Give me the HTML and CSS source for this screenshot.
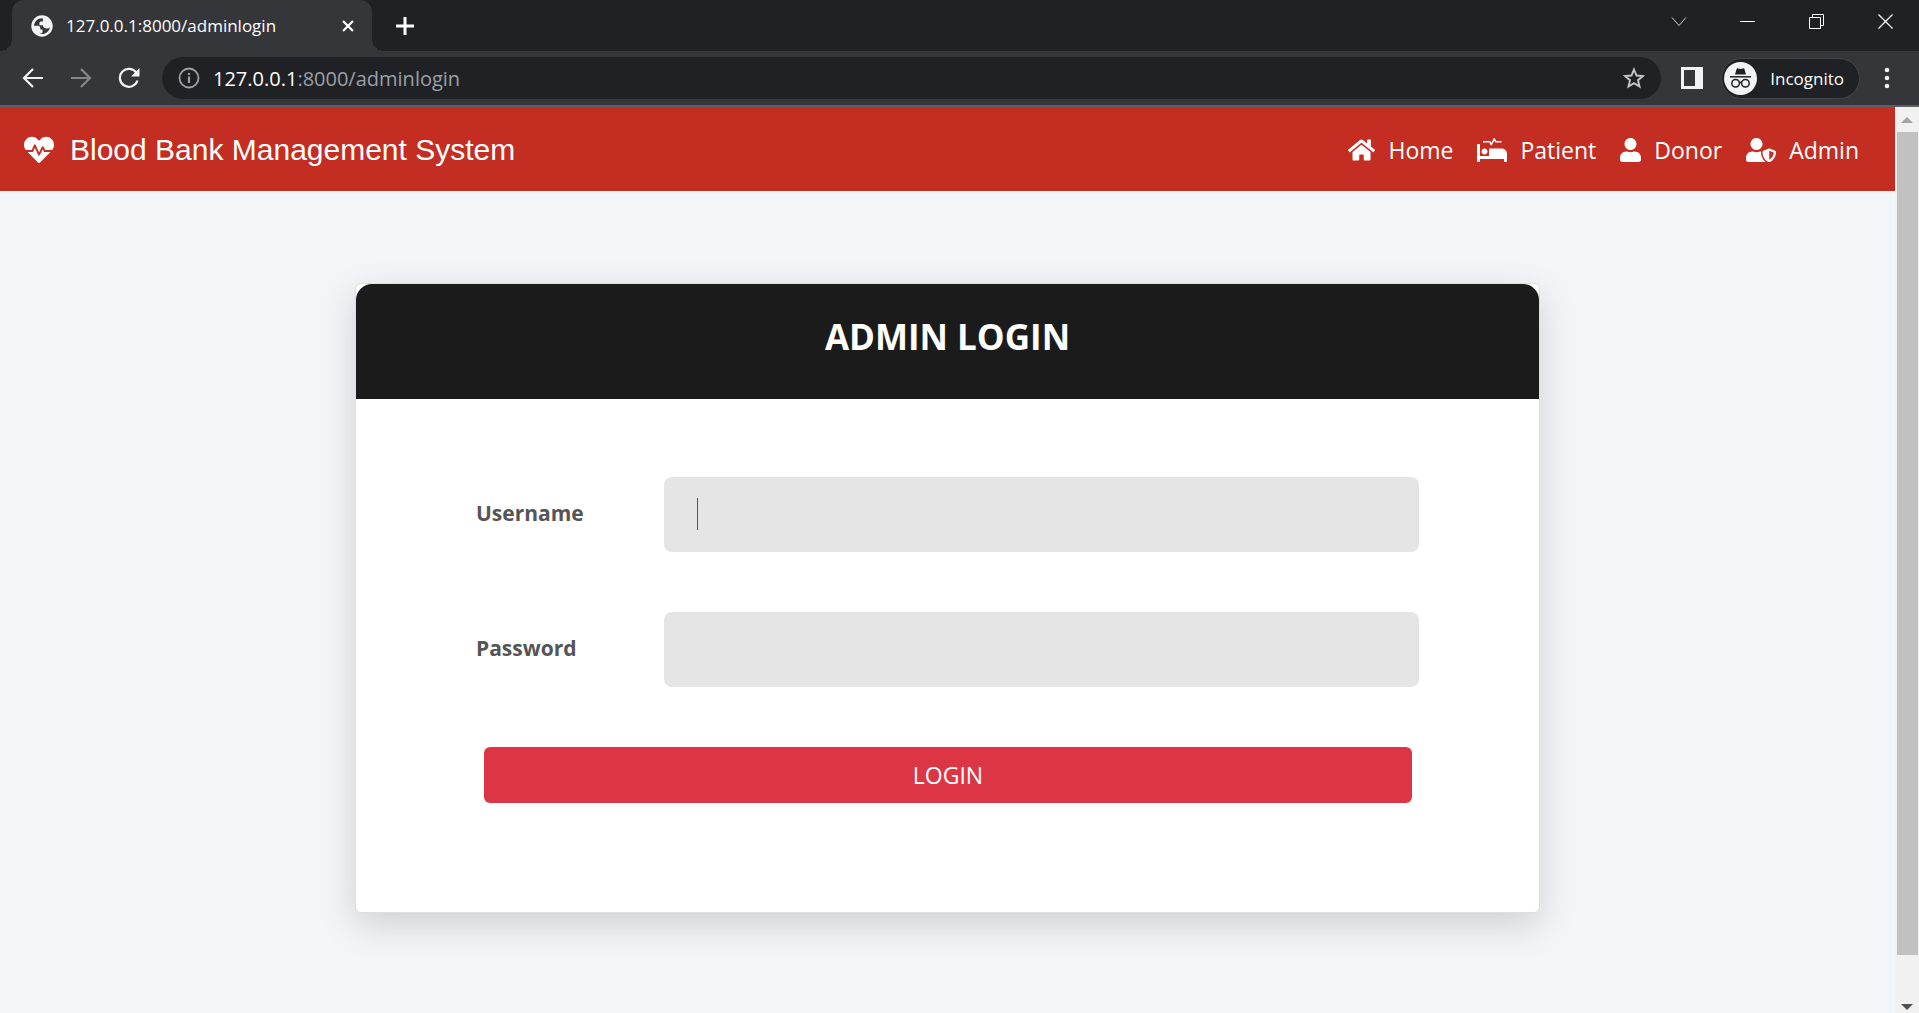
FILE: index.html
```html
<!DOCTYPE html>
<html lang="en">
<head>
<meta charset="utf-8">
<meta name="viewport" content="width=device-width, initial-scale=1">
<title>127.0.0.1:8000/adminlogin</title>
<link rel="stylesheet" href="styles.css">
</head>
<body>
<div class="browser">
  <div class="tabstrip">
    <div class="tab">
      <svg class="globe" viewBox="0 0 22 22" width="22" height="22"><circle cx="11" cy="11" r="10.7" fill="#f1f3f4"/><path d="M11.5 3.2C6.8 3 3.4 6.500 3 10.800h3.600c1.900 0 2.700.9 2.700 2.400v1.300h2.200v3.300c-1 .5-2.400.6-3.300.3 1.600.9 3.300 1.100 5 .7 3.200-.9 5.300-3.400 5.700-6.500-1 1-2.200 1.300-3.600 1.100-2.200-.2-3.300-1.400-3.500-3.200H8.400V8.100c0-1.100.7-1.700 1.800-1.700h1.700V4.800c0-.6-.1-1.100-.4-1.600z" fill="#35363a"/></svg>
      <span class="tab-title">127.0.0.1:8000/adminlogin</span>
      <button class="plain" type="button" aria-label="Close tab"><svg viewBox="0 0 14 14" width="14" height="14"><path d="M2 2l10 10M12 2L2 12" stroke="#fff" stroke-width="2.200" fill="none"/></svg></button>
    </div>
    <button class="plain new-tab" type="button" aria-label="New tab"><svg viewBox="0 0 18 18" width="18" height="18"><path d="M9 0v18M0 9h18" stroke="#fff" stroke-width="3" fill="none"/></svg></button>
    <div class="window-controls">
      <button class="plain" type="button" aria-label="Search tabs"><svg viewBox="0 0 16 16" width="16" height="16"><path d="M1 3.500l7 8 7-8" stroke="#ccc" fill="none"/></svg></button>
      <button class="plain" type="button" aria-label="Minimize"><svg viewBox="0 0 16 16" width="16" height="16"><path d="M0 7.500h15" stroke="#fff" fill="none"/></svg></button>
      <button class="plain" type="button" aria-label="Restore"><svg viewBox="0 0 16 16" width="16" height="16"><path d="M.5 3.500h11v11H.5zM3.500 3V.5h11v11H12" stroke="#fff" fill="none"/></svg></button>
      <button class="plain" type="button" aria-label="Close"><svg viewBox="0 0 16 16" width="16" height="16"><path d="M.5.5l14 14M14.500.5l-14 14" stroke="#fff" stroke-width="1.200" fill="none"/></svg></button>
    </div>
  </div>
  <div class="toolbar">
    <button class="plain" type="button" aria-label="Back"><svg viewBox="0 0 22 22" width="22" height="22"><path d="M21 11H3M11 2l-9 9 9 9" stroke="#f1f3f4" stroke-width="2.200" fill="none"/></svg></button>
    <button class="plain" type="button" aria-label="Forward"><svg viewBox="0 0 22 22" width="22" height="22"><path d="M1 11h18M11 2l9 9-9 9" stroke="#85868a" stroke-width="2.200" fill="none"/></svg></button>
    <button class="plain" type="button" aria-label="Reload"><svg viewBox="0 0 22 22" width="22" height="22"><path d="M18.500 6A9 9 0 1 0 19.500 13.500" stroke="#f1f3f4" stroke-width="2.200" fill="none"/><path d="M21.500 1v8.500H13z" fill="#f1f3f4"/></svg></button>
    <div class="omnibox">
      <svg viewBox="0 0 22 22" width="22" height="22"><circle cx="11" cy="11" r="9.500" stroke="#9aa0a6" stroke-width="1.800" fill="none"/><path d="M11 9.500v6.500M11 6v2" stroke="#9aa0a6" stroke-width="2.200"/></svg>
      <div class="url"><span class="host">127.0.0.1</span>:8000/adminlogin</div>
      <button class="plain" type="button" aria-label="Bookmark"><svg viewBox="0 0 22 22" width="22" height="22"><path d="M11 2.500l2.500 6 6.400.5-4.900 4.200 1.500 6.300-5.500-3.400-5.500 3.400L7 13.200 2.100 9l6.400-.5z" stroke="#c4c7c9" stroke-width="1.900" fill="none"/></svg></button>
    </div>
    <button class="plain" type="button" aria-label="Side panel"><svg viewBox="0 0 22 22" width="22" height="22"><path fill-rule="evenodd" d="M0 0h22v22H0zM3 3v16h11V3z" fill="#f1f3f4"/></svg></button>
    <div class="profile">
      <svg viewBox="0 0 33 33" width="33" height="33"><circle cx="16.500" cy="16.500" r="16.500" fill="#f1f3f4"/><path d="M11 12.500l1.600-5.400c.2-.7.7-.9 1.300-.7l2.600.6 2.600-.6c.6-.2 1.100 0 1.300.7l1.600 5.400z" fill="#202124"/><path d="M6 14.800h21" stroke="#202124" stroke-width="1.500"/><g stroke="#202124" stroke-width="1.500" fill="none"><circle cx="11.600" cy="21.300" r="3.800"/><circle cx="21.400" cy="21.300" r="3.800"/><path d="M15.300 20.800q1.200-.9 2.400 0"/></g></svg>
      <span>Incognito</span>
    </div>
    <button class="plain" type="button" aria-label="Menu"><svg viewBox="0 0 22 22" width="22" height="22"><g fill="#f1f3f4"><circle cx="11" cy="3" r="2.300"/><circle cx="11" cy="11" r="2.300"/><circle cx="11" cy="19" r="2.300"/></g></svg></button>
  </div>
</div>
<div class="viewport">
  <div class="page">
    <header class="site-header">
      <a class="brand" href="#"><svg viewBox="0 0 512 512" width="30" height="30"><path d="M320.200 243.800l-49.700 99.400c-6 12.100-23.400 11.700-28.900-.6l-56.900-126.300-30 71.700H60.600l182.500 186.500c7.100 7.300 18.600 7.300 25.700 0L451.400 288H342.300l-22.100-44.200zM473.700 73.900l-2.400-2.500c-51.500-52.600-135.800-52.600-187.400 0L256 100l-27.900-28.500c-51.500-52.700-135.900-52.700-187.400 0l-2.400 2.400C-10.400 123.700-12.500 203 31 256h102.400l35.900-86.200c5.400-12.900 23.600-13.200 29.400-.4l58.200 129.300 49-97.900c5.900-11.800 22.700-11.800 28.600 0l27.600 55.200H481c43.500-53 41.400-132.300-7.300-182.100z"/></svg><span>Blood Bank Management System</span></a>
      <nav class="nav">
        <a href="#"><svg viewBox="0 0 576 512" width="27" height="24"><path d="M280.370 148.260L96 300.110V464a16 16 0 0 0 16 16l112.060-.29a16 16 0 0 0 15.920-16V368a16 16 0 0 1 16-16h64a16 16 0 0 1 16 16v95.640a16 16 0 0 0 16 16.050L464 480a16 16 0 0 0 16-16V300L295.670 148.260a12.190 12.190 0 0 0-15.300 0zM571.600 251.470L488 182.560V44.050a12 12 0 0 0-12-12h-56a12 12 0 0 0-12 12v72.610L318.470 43a48 48 0 0 0-61 0L4.340 251.470a12 12 0 0 0-1.600 16.900l25.500 31A12 12 0 0 0 45.150 301l235.220-193.740a12.190 12.190 0 0 1 15.300 0L530.900 301a12 12 0 0 0 16.900-1.600l25.500-31a12 12 0 0 0-1.700-16.930z"/></svg>Home</a>
        <a href="#"><svg viewBox="0 0 640 512" width="30" height="24"><path d="M528 224H272c-8.800 0-16 7.200-16 16v144H64V144c0-8.800-7.200-16-16-16H16c-8.800 0-16 7.200-16 16v352c0 8.800 7.200 16 16 16h32c8.800 0 16-7.200 16-16v-48h512v48c0 8.800 7.200 16 16 16h32c8.800 0 16-7.200 16-16V336c0-61.900-50.100-112-112-112zM136 96h126.100l27.600 55.200c5.900 11.800 22.700 11.800 28.600 0L368 51.800 390.100 96H512c8.800 0 16-7.200 16-16s-7.200-16-16-16H409.900L382.300 8.800C376.400-3 359.600-3 353.700 8.800L304 108.200l-19.900-39.800c-1.400-2.700-4.100-4.400-7.200-4.400H136c-4.400 0-8 3.600-8 8v16c0 4.400 3.600 8 8 8zm24 256c35.300 0 64-28.700 64-64s-28.700-64-64-64-64 28.700-64 64 28.700 64 64 64z"/></svg>Patient</a>
        <a href="#"><svg viewBox="0 0 448 512" width="21" height="24"><path d="M224 256c70.700 0 128-57.300 128-128S294.700 0 224 0 96 57.300 96 128s57.300 128 128 128zm89.600 32h-16.700c-22.200 10.200-46.900 16-72.900 16s-50.600-5.800-72.900-16h-16.700C60.200 288 0 348.200 0 422.400V464c0 26.500 21.500 48 48 48h352c26.500 0 48-21.500 48-48v-41.600c0-74.200-60.200-134.400-134.400-134.400z"/></svg>Donor</a>
        <a href="#"><svg viewBox="0 0 640 512" width="30" height="24"><path d="M622.300 271.100l-115.200-45c-4.100-1.600-12.600-3.700-22.200 0l-115.200 45c-10.700 4.200-17.700 14-17.700 24.900 0 111.600 68.700 188.800 132.900 213.900 9.600 3.700 18 1.600 22.200 0C558.400 489.900 640 420.500 640 296c0-10.900-7-20.700-17.700-24.900zM496 462.400V273.300l95.500 37.300c-5.600 87.100-60.900 135.400-95.500 151.800zM224 256c70.700 0 128-57.300 128-128S294.700 0 224 0 96 57.300 96 128s57.300 128 128 128zm96 40c0-2.500.8-4.800 1.100-7.200-2.500-.1-4.900-.8-7.500-.8h-16.700c-22.200 10.200-46.900 16-72.900 16s-50.600-5.800-72.900-16h-16.700C60.200 288 0 348.200 0 422.400V464c0 26.500 21.500 48 48 48h352c6.800 0 13.300-1.500 19.200-4-54-42.900-99.200-116.700-99.200-212z"/></svg>Admin</a>
      </nav>
    </header>
    <main>
      <div class="card">
        <h1>ADMIN LOGIN</h1>
        <form>
          <div class="field"><label for="username">Username</label><div class="control"><input id="username" name="username" type="text" autocomplete="off"><span class="caret"></span></div></div>
          <div class="field"><label for="password">Password</label><div class="control"><input id="password" name="password" type="password"></div></div>
          <button class="login" type="submit">LOGIN</button>
        </form>
      </div>
    </main>
  </div>
  <div class="scrollbar" aria-hidden="true">
    <div class="arrow"><svg viewBox="0 0 12 6" width="12" height="6"><path d="M0 6l6-6 6 6z" fill="#a3a3a3"/></svg></div>
    <div class="track"><div class="thumb"></div></div>
    <div class="arrow down"><svg viewBox="0 0 12 6" width="12" height="6"><path d="M0 0l6 6 6-6z" fill="#505050"/></svg></div>
  </div>
</div>
</body>
</html>
```

FILE: styles.css
```css
* { box-sizing: border-box; }

body {
  margin: 0;
  height: 100vh;
  display: flex;
  flex-direction: column;
  overflow: hidden;
  font-family: "Open Sans", "Noto Sans", sans-serif;
}

svg { display: block; flex: none; }

.plain {
  display: flex;
  padding: 0;
  border: 0;
  background: none;
}

/* Browser frame */
.browser {
  background: #35363a;
  border-bottom: 2px solid #5f6064;
  color: #fff;
}

.tabstrip {
  display: flex;
  height: 51px;
  padding-left: 12px;
  background: #202124;
}

.tab {
  position: relative;
  display: flex;
  align-items: center;
  width: 360px;
  padding: 0 17px 0 19px;
  gap: 13px;
  border-radius: 12px 12px 0 0;
  background: #35363a;
  font-size: 17px;
}

.tab::before,
.tab::after {
  content: "";
  position: absolute;
  bottom: 0;
  width: 12px;
  height: 12px;
}

.tab::before {
  right: 100%;
  background: radial-gradient(circle at 0 0, #202124 12px, #35363a 12px);
}

.tab::after {
  left: 100%;
  background: radial-gradient(circle at 100% 0, #202124 12px, #35363a 12px);
}

.tab-title { flex: 1; white-space: nowrap; }

.new-tab { align-self: center; margin-left: 24px; }

.window-controls {
  display: flex;
  gap: 53px;
  margin-left: auto;
  padding: 14px 25px 0 0;
}

.toolbar {
  display: flex;
  align-items: center;
  height: 54px;
  padding: 0 21px 0 22px;
  gap: 26px;
}

.omnibox {
  flex: 1;
  display: flex;
  align-items: center;
  height: 42px;
  margin-left: -4px;
  padding: 0 16px;
  gap: 13px;
  border-radius: 21px;
  background: #202124;
}

.url { flex: 1; color: #9aa0a6; font-size: 20px; }
.host { color: #fff; }

.omnibox + .plain { margin-left: -6px; }

.profile {
  display: flex;
  align-items: center;
  height: 41px;
  margin: 0 -10px 0 -8px;
  padding: 0 15px 0 2px;
  gap: 13px;
  border: 1px solid #45464a;
  border-radius: 21px;
  background: #202124;
  font-size: 17px;
}

/* Page viewport */
.viewport {
  flex: 1;
  min-height: 0;
  display: flex;
}

.page {
  flex: 1;
  background: #f3f5f9;
}

.site-header {
  display: flex;
  align-items: center;
  justify-content: space-between;
  height: 84px;
  padding: 2px 36px 0 24px;
  background: #c42d22;
}

.site-header svg { fill: #fff; }

.brand {
  display: flex;
  align-items: center;
  gap: 16px;
  color: #fff;
  font: 30px "Liberation Sans", Arial, sans-serif;
  text-decoration: none;
}

.nav { display: flex; gap: 24px; }

.nav a {
  display: flex;
  align-items: center;
  gap: 13px;
  color: #fff;
  font-size: 23px;
  text-decoration: none;
}

main { padding: 92px 24px 0; }

.card {
  max-width: 1185px;
  margin: 0 auto;
  border: 1px solid #dfdfe0;
  border-radius: 6px;
  background: #fff;
  box-shadow: 0 12px 36px rgba(0, 0, 0, .15);
}

.card h1 {
  margin: 0;
  padding: 29px 24px 38px;
  border-radius: 16px 16px 0 0;
  background: #1b1b1b;
  color: #fff;
  font-size: 35px;
  line-height: 48px;
  text-align: center;
}

form {
  display: flex;
  flex-direction: column;
  gap: 60px;
  padding: 78px 120px 109px;
}

.field {
  display: grid;
  grid-template-columns: 188px 1fr;
  align-items: center;
}

.field label {
  padding-bottom: 4px;
  color: #555;
  font-size: 21px;
  font-weight: 700;
}

.control { position: relative; }

.control input {
  display: block;
  width: 100%;
  height: 75px;
  padding: 0 33px;
  border: 0;
  border-radius: 8px;
  background: #e5e5e5;
  color: #555;
  font: 23px "Open Sans", sans-serif;
}

.caret {
  position: absolute;
  left: 33px;
  top: 21px;
  width: 1px;
  height: 32px;
  background: #555;
}

.login {
  height: 56px;
  margin: 0 7px 0 8px;
  padding: 0;
  border: 0;
  border-radius: 6px;
  background: #dc3545;
  color: #fff;
  font: 23px "Open Sans", sans-serif;
}

/* Scrollbar */
.scrollbar {
  display: flex;
  flex-direction: column;
  width: 24px;
  background: #f1f1f1;
}

.arrow {
  display: flex;
  align-items: center;
  justify-content: center;
  height: 25px;
}

.arrow.down { height: 12px; }

.track {
  flex: 1;
  display: grid;
  grid-template-rows: 18fr 1fr;
  padding: 0 1px 0 2px;
}

.thumb { background: #c1c1c1; }
```
